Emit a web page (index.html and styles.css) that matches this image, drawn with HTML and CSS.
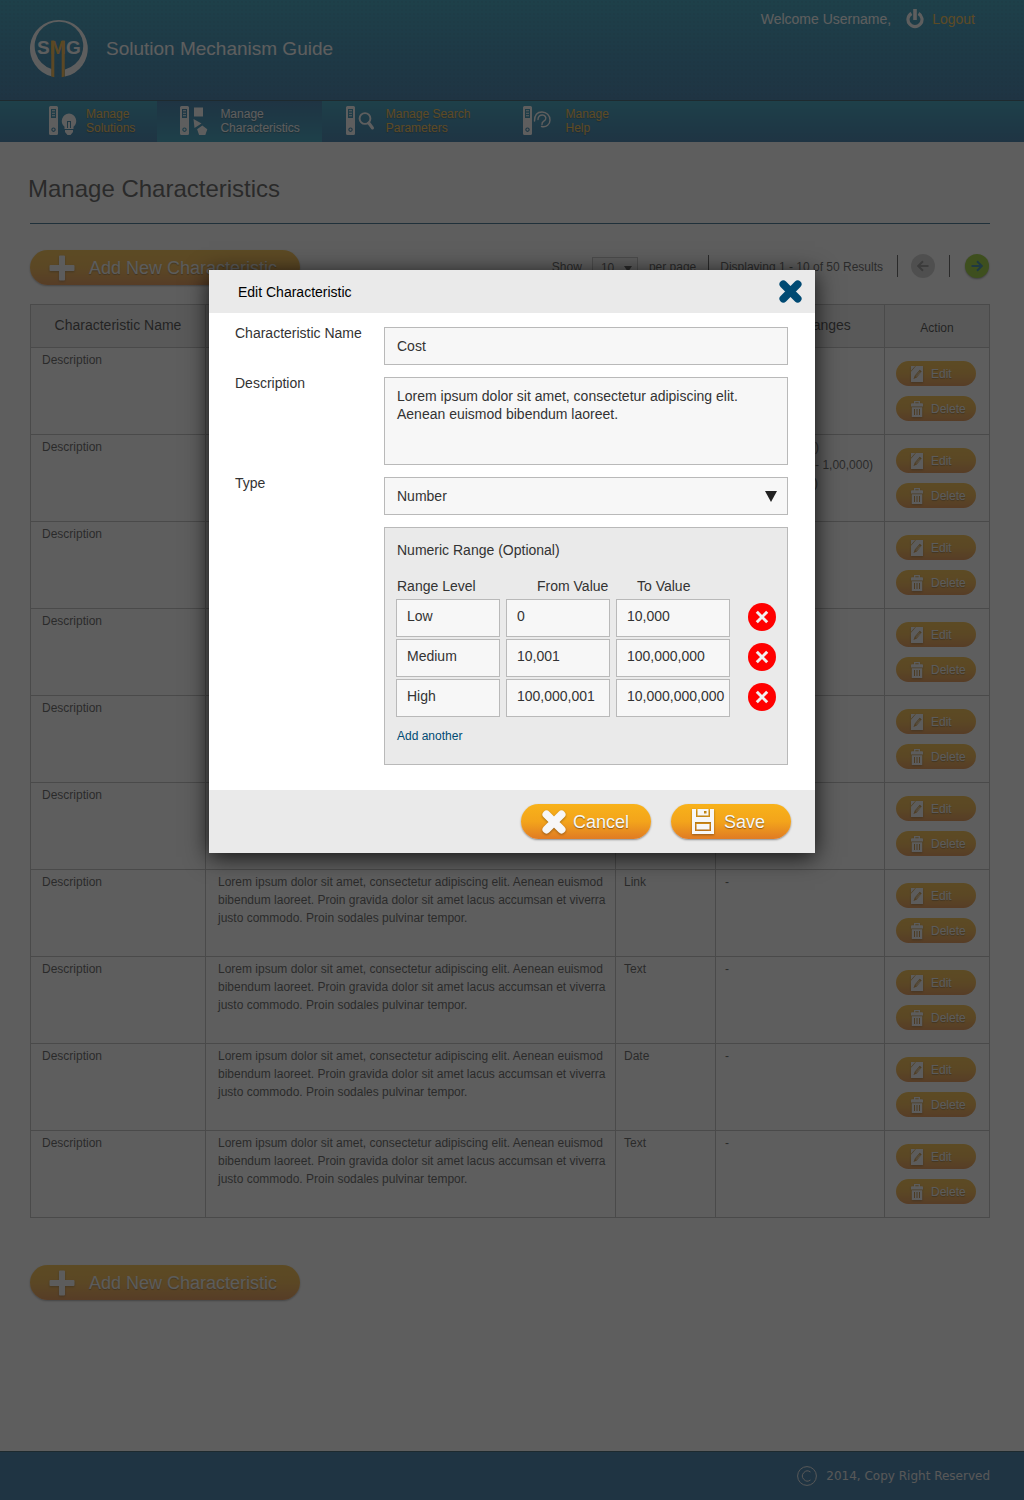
FILE: index.html
```html
<!DOCTYPE html>
<html lang="en">
<head>
<meta charset="utf-8">
<meta name="viewport" content="width=device-width, initial-scale=1">
<title>Manage Characteristics - Solution Mechanism Guide</title>
<link rel="stylesheet" href="styles.css">
</head>
<body>
<svg class="sprite" aria-hidden="true">
  <symbol id="i-plus" viewBox="0 0 26 26"><path d="M10 1.500q0-1 1-1h4q1 0 1 1V10h8.500q1 0 1 1v4q0 1-1 1H16v8.500q0 1-1 1h-4q-1 0-1-1V16H1.500q-1 0-1-1v-4q0-1 1-1H10z"/></symbol>
  <symbol id="i-cross" viewBox="0 0 24 24"><path d="M4.500 4.500l15 15M19.500 4.500l-15 15" stroke="currentColor" stroke-width="8" stroke-linecap="round"/></symbol>
  <symbol id="i-edit" viewBox="0 0 12 16"><path fill-rule="evenodd" d="M5 0H12v16H0V5.700zM8.800 3.800L3.800 9.500 2.500 13l3.400-1.600 4.800-5.900z"/><path d="M0 4.700V0h4.200z"/><path d="M8.600 5.500L4.600 10.200M9.500 6.200L5.500 11" stroke="currentColor" stroke-width=".6"/></symbol>
  <symbol id="i-trash" viewBox="0 0 12 16"><path fill-rule="evenodd" d="M3 0h6v2.300h2q1 0 1 1V5.500H0V3.300q0-1 1-1h2zM4.300 1.200v1.100h3.400V1.200z"/><path fill-rule="evenodd" d="M.8 6.300h10.400V16H.8zM3 8v6h1V8zM5.500 8v6h1V8zM8 8v6h1V8z"/></symbol>
  <symbol id="i-remote" viewBox="0 0 9 29"><path fill-rule="evenodd" d="M1.500 0h6Q9 0 9 1.500v26Q9 29 7.500 29h-6Q0 29 0 27.500v-26Q0 0 1.500 0zM2 3v9h5V3zM4.500 21.500a2.200 2.200 0 1 0 .01 0z"/><path d="M3 4.300h3v1H3zM3 6.800h3v1H3zM3 9.300h3v1H3z"/><circle cx="4.500" cy="23.700" r="1.100"/></symbol>
  <symbol id="i-disk" viewBox="0 0 22 25"><path fill-rule="evenodd" d="M0 0h4v8h14V0h4v25H0zM3 13v9h16v-9z"/><path fill-rule="evenodd" d="M5.500 0h11v6.500h-11zM12 2v2.500h2.500V2z"/><path d="M4.500 15h13v5.500h-13z"/></symbol>
</svg>

<div class="page">
  <header class="site-header">
    <a class="brand" href="#">
      <svg class="brand-logo" viewBox="0 0 58 58" aria-hidden="true">
        <path class="logo-ring" fill-rule="evenodd" d="M29 0a28.600 28.600 0 0 0-7.500 56.300V49.100A24.300 24.300 0 1 1 35 49.500V56.600A28.600 28.600 0 0 0 29 0z"/>
        <path class="logo-leg" d="M21.300 20.500h3v36.700l-3-.8zM31.700 20.500h3v36l-3 .8z"/>
        <text class="logo-text" x="7" y="34">S</text>
        <text class="logo-text logo-mid" x="20" y="34">M</text>
        <text class="logo-text" x="36" y="34">G</text>
      </svg>
      <span class="brand-name">Solution Mechanism Guide</span>
    </a>
    <div class="account">
      <span class="welcome">Welcome Username,</span>
      <a class="logout" href="#">
        <svg class="power" viewBox="0 0 18 20" aria-hidden="true"><path d="M5.500 4.500A7 7 0 1 0 12.500 4.500" fill="none" stroke="currentColor" stroke-width="3.200"/><path d="M7.200 0h3.600v11H7.200z"/></svg>
        Logout</a>
    </div>
  </header>

  <nav class="main-nav" aria-label="Main">
    <a class="nav-item" href="#">
      <svg class="nav-icon" viewBox="0 0 42 30" aria-hidden="true"><use href="#i-remote" x="5" y="0" width="9" height="29"/><path d="M25 7.500a7.500 7.500 0 0 1 4.500 13.200V23h-9v-2.300A7.500 7.500 0 0 1 25 7.500zM21 24h8v2l-2.500 3h-3L21 26z"/><path class="nav-line" d="M23.500 22v-6M26.500 22v-6M23 15.500h4"/></svg>
      <span>Manage<br>Solutions</span></a>
    <a class="nav-item active" href="#" aria-current="page">
      <svg class="nav-icon" viewBox="0 0 42 30" aria-hidden="true"><use href="#i-remote" x="2" y="0" width="9" height="29"/><path d="M16 1.500h9v9h-9zM15.500 13l8 4.500-7 4.500zM24.300 19.500l5 3.700-2 5.800h-6.200l-2-5.800z"/></svg>
      <span>Manage<br>Characteristics</span></a>
    <a class="nav-item nav-item-wide" href="#">
      <svg class="nav-icon" viewBox="0 0 42 30" aria-hidden="true"><use href="#i-remote" x="2" y="0" width="9" height="29"/><circle cx="21" cy="12.500" r="5.400" fill="none" stroke="currentColor" stroke-width="1.900"/><path d="M24.800 17l3.700 5" stroke="currentColor" stroke-width="3" stroke-linecap="round"/></svg>
      <span>Manage Search<br>Parameters</span></a>
    <a class="nav-item" href="#">
      <svg class="nav-icon" viewBox="0 0 42 30" aria-hidden="true"><use href="#i-remote" x="0" y="0" width="9" height="29"/><path d="M11.500 15C11.500 9 14.500 6 19 6S27 9.500 27 14 23.500 21.500 18.500 20.500M15 13.500C15 10.500 17 9 19.500 9S23.500 11.500 22.500 13.500 18.500 15 19 18.500" fill="none" stroke="currentColor" stroke-width="1.400" stroke-linecap="round"/></svg>
      <span>Manage<br>Help</span></a>
  </nav>

  <main class="main">
    <h1 class="page-title">Manage Characteristics</h1>
    <div class="content">
      <div class="toolbar">
        <button class="pill pill-add" type="button"><svg class="plus" aria-hidden="true"><use href="#i-plus"/></svg>Add New Characteristic</button>
        <div class="pager">
          <label class="pager-text" for="per-page">Show</label>
          <span class="page-size"><select id="per-page"><option>10</option></select><svg class="caret-small" viewBox="0 0 8 6" aria-hidden="true"><path d="M0 0h8L4 6z"/></svg></span>
          <span class="pager-text">per page</span>
          <span class="results">Displaying 1 - 10 of 50 Results</span>
          <button class="page-btn" type="button" aria-label="Previous page" disabled><svg viewBox="0 0 12 12" aria-hidden="true"><path d="M11.500 6H1.500M6 1.200L1.200 6 6 10.800"/></svg></button>
          <span class="bar"></span>
          <button class="page-btn page-next" type="button" aria-label="Next page"><svg viewBox="0 0 12 12" aria-hidden="true"><path d="M.5 6h10M6 1.200L10.800 6 6 10.800"/></svg></button>
        </div>
      </div>

      <table class="grid">
        <colgroup><col class="c-name"><col><col class="c-type"><col class="c-range"><col class="c-action"></colgroup>
        <thead><tr><th>Characteristic Name</th><th>Description</th><th>Type</th><th>Values / Ranges</th><th class="th-action">Action</th></tr></thead>
        <tbody>
          <tr><td>Description</td><td>Lorem ipsum dolor sit amet, consectetur adipiscing elit. Aenean euismod bibendum laoreet. Proin gravida dolor sit amet lacus accumsan et viverra justo commodo. Proin sodales pulvinar tempor.</td><td>Text</td><td>-</td><td><div class="actions"><button class="pill mini" type="button"><svg aria-hidden="true"><use href="#i-edit"/></svg>Edit</button><button class="pill mini" type="button"><svg aria-hidden="true"><use href="#i-trash"/></svg>Delete</button></div></td></tr>
          <tr><td>Description</td><td>Lorem ipsum dolor sit amet, consectetur adipiscing elit. Aenean euismod bibendum laoreet. Proin gravida dolor sit amet lacus accumsan et viverra justo commodo. Proin sodales pulvinar tempor.</td><td>Number</td><td>Low (10 - 10,000)<br>Medium (10,001 - 1,00,000)<br>High (&gt; 1,00,000)</td><td><div class="actions"><button class="pill mini" type="button"><svg aria-hidden="true"><use href="#i-edit"/></svg>Edit</button><button class="pill mini" type="button"><svg aria-hidden="true"><use href="#i-trash"/></svg>Delete</button></div></td></tr>
          <tr><td>Description</td><td>Lorem ipsum dolor sit amet, consectetur adipiscing elit. Aenean euismod bibendum laoreet. Proin gravida dolor sit amet lacus accumsan et viverra justo commodo. Proin sodales pulvinar tempor.</td><td>Text</td><td>-</td><td><div class="actions"><button class="pill mini" type="button"><svg aria-hidden="true"><use href="#i-edit"/></svg>Edit</button><button class="pill mini" type="button"><svg aria-hidden="true"><use href="#i-trash"/></svg>Delete</button></div></td></tr>
          <tr><td>Description</td><td>Lorem ipsum dolor sit amet, consectetur adipiscing elit. Aenean euismod bibendum laoreet. Proin gravida dolor sit amet lacus accumsan et viverra justo commodo. Proin sodales pulvinar tempor.</td><td>Text</td><td>-</td><td><div class="actions"><button class="pill mini" type="button"><svg aria-hidden="true"><use href="#i-edit"/></svg>Edit</button><button class="pill mini" type="button"><svg aria-hidden="true"><use href="#i-trash"/></svg>Delete</button></div></td></tr>
          <tr><td>Description</td><td>Lorem ipsum dolor sit amet, consectetur adipiscing elit. Aenean euismod bibendum laoreet. Proin gravida dolor sit amet lacus accumsan et viverra justo commodo. Proin sodales pulvinar tempor.</td><td>Date</td><td>-</td><td><div class="actions"><button class="pill mini" type="button"><svg aria-hidden="true"><use href="#i-edit"/></svg>Edit</button><button class="pill mini" type="button"><svg aria-hidden="true"><use href="#i-trash"/></svg>Delete</button></div></td></tr>
          <tr><td>Description</td><td>Lorem ipsum dolor sit amet, consectetur adipiscing elit. Aenean euismod bibendum laoreet. Proin gravida dolor sit amet lacus accumsan et viverra justo commodo.</td><td>Text</td><td>-</td><td><div class="actions"><button class="pill mini" type="button"><svg aria-hidden="true"><use href="#i-edit"/></svg>Edit</button><button class="pill mini" type="button"><svg aria-hidden="true"><use href="#i-trash"/></svg>Delete</button></div></td></tr>
          <tr><td>Description</td><td>Lorem ipsum dolor sit amet, consectetur adipiscing elit. Aenean euismod bibendum laoreet. Proin gravida dolor sit amet lacus accumsan et viverra justo commodo. Proin sodales pulvinar tempor.</td><td>Link</td><td>-</td><td><div class="actions"><button class="pill mini" type="button"><svg aria-hidden="true"><use href="#i-edit"/></svg>Edit</button><button class="pill mini" type="button"><svg aria-hidden="true"><use href="#i-trash"/></svg>Delete</button></div></td></tr>
          <tr><td>Description</td><td>Lorem ipsum dolor sit amet, consectetur adipiscing elit. Aenean euismod bibendum laoreet. Proin gravida dolor sit amet lacus accumsan et viverra justo commodo. Proin sodales pulvinar tempor.</td><td>Text</td><td>-</td><td><div class="actions"><button class="pill mini" type="button"><svg aria-hidden="true"><use href="#i-edit"/></svg>Edit</button><button class="pill mini" type="button"><svg aria-hidden="true"><use href="#i-trash"/></svg>Delete</button></div></td></tr>
          <tr><td>Description</td><td>Lorem ipsum dolor sit amet, consectetur adipiscing elit. Aenean euismod bibendum laoreet. Proin gravida dolor sit amet lacus accumsan et viverra justo commodo. Proin sodales pulvinar tempor.</td><td>Date</td><td>-</td><td><div class="actions"><button class="pill mini" type="button"><svg aria-hidden="true"><use href="#i-edit"/></svg>Edit</button><button class="pill mini" type="button"><svg aria-hidden="true"><use href="#i-trash"/></svg>Delete</button></div></td></tr>
          <tr><td>Description</td><td>Lorem ipsum dolor sit amet, consectetur adipiscing elit. Aenean euismod bibendum laoreet. Proin gravida dolor sit amet lacus accumsan et viverra justo commodo. Proin sodales pulvinar tempor.</td><td>Text</td><td>-</td><td><div class="actions"><button class="pill mini" type="button"><svg aria-hidden="true"><use href="#i-edit"/></svg>Edit</button><button class="pill mini" type="button"><svg aria-hidden="true"><use href="#i-trash"/></svg>Delete</button></div></td></tr>
        </tbody>
      </table>

      <button class="pill pill-add" type="button"><svg class="plus" aria-hidden="true"><use href="#i-plus"/></svg>Add New Characteristic</button>
    </div>
  </main>

  <footer class="site-footer">
    <svg class="copy-mark" viewBox="0 0 20 20" aria-hidden="true"><circle cx="10" cy="10" r="9.400"/><path d="M13.500 6A5 5 0 1 0 13.500 14"/></svg>
    <span>2014, Copy Right Reserved</span>
  </footer>
</div>

<div class="overlay">
  <form class="modal" role="dialog" aria-modal="true" aria-labelledby="dialog-title">
    <div class="modal-head">
      <h2 id="dialog-title">Edit Characteristic</h2>
      <button class="close" type="button" aria-label="Close"><svg aria-hidden="true"><use href="#i-cross"/></svg></button>
    </div>
    <div class="modal-body">
      <label for="name">Characteristic Name</label>
      <input class="field" id="name" type="text" value="Cost">
      <label for="desc">Description</label>
      <textarea class="field" id="desc">Lorem ipsum dolor sit amet, consectetur adipiscing elit.
Aenean euismod bibendum laoreet.</textarea>
      <label for="type">Type</label>
      <div class="select-wrap">
        <select class="field" id="type"><option>Number</option></select>
        <svg class="caret" viewBox="0 0 12 11" aria-hidden="true"><path d="M0 0h12L6 11z"/></svg>
      </div>
      <div class="range" role="group" aria-labelledby="range-title">
        <div class="range-title" id="range-title">Numeric Range (Optional)</div>
        <div class="range-head"><span>Range Level</span><span>From Value</span><span>To Value</span></div>
        <div class="range-rows">
          <div class="range-row">
            <input type="text" value="Low" aria-label="Range level 1"><input type="text" value="0" aria-label="From value 1"><input type="text" value="10,000" aria-label="To value 1">
            <button class="remove" type="button" aria-label="Remove range 1"><svg viewBox="0 0 28 28" aria-hidden="true"><path d="M8.800 8.800l10.400 10.400M19.200 8.800l-10.400 10.400"/></svg></button>
          </div>
          <div class="range-row">
            <input type="text" value="Medium" aria-label="Range level 2"><input type="text" value="10,001" aria-label="From value 2"><input type="text" value="100,000,000" aria-label="To value 2">
            <button class="remove" type="button" aria-label="Remove range 2"><svg viewBox="0 0 28 28" aria-hidden="true"><path d="M8.800 8.800l10.400 10.400M19.200 8.800l-10.400 10.400"/></svg></button>
          </div>
          <div class="range-row">
            <input type="text" value="High" aria-label="Range level 3"><input type="text" value="100,000,001" aria-label="From value 3"><input type="text" value="10,000,000,000" aria-label="To value 3">
            <button class="remove" type="button" aria-label="Remove range 3"><svg viewBox="0 0 28 28" aria-hidden="true"><path d="M8.800 8.800l10.400 10.400M19.200 8.800l-10.400 10.400"/></svg></button>
          </div>
        </div>
        <a class="add-another" href="#">Add another</a>
      </div>
    </div>
    <div class="modal-foot">
      <button class="pill pill-cancel" type="button"><svg class="cross" aria-hidden="true"><use href="#i-cross"/></svg>Cancel</button>
      <button class="pill pill-save" type="submit"><svg class="disk" aria-hidden="true"><use href="#i-disk"/></svg>Save</button>
    </div>
  </form>
</div>
</body>
</html>
```
FILE: styles.css
```css
* { box-sizing: border-box; }

body {
  margin: 0;
  position: relative;
  background: #fff;
  color: #333;
  font: 14px/16px "Liberation Sans", Arial, sans-serif;
}

a { color: inherit; text-decoration: none; }
button, input, select, textarea { font: inherit; color: inherit; margin: 0; }
button { border: 0; padding: 0; background: none; cursor: pointer; }
svg { fill: currentColor; display: block; flex: none; }
.sprite { position: absolute; width: 0; height: 0; }

.page {
  min-height: 100vh;
  display: flex;
  flex-direction: column;
}

/* Header */
.site-header {
  height: 100px;
  padding: 0 49px 0 30px;
  display: flex;
  justify-content: space-between;
  background:
    radial-gradient(circle, rgba(0, 30, 60, .08) 1px, transparent 1px) 0 0 / 4px 4px,
    linear-gradient(#0088ae, #045894);
  color: #fff;
}
.brand { display: flex; align-items: center; gap: 18px; height: 98px; }
.brand-logo { width: 58px; height: 58px; }
.logo-text { font-size: 19px; font-weight: 700; }
.logo-mid, .logo-leg { fill: #f8a81a; }
.brand-name { font-size: 19px; line-height: 22px; }
.account { display: flex; align-items: center; gap: 15px; height: 37px; }
.logout { display: flex; align-items: center; gap: 8px; color: #f8b21a; }
.power { width: 18px; height: 20px; color: #fff; }

.main-nav {
  display: flex;
  height: 42px;
  padding-left: 22px;
  border-top: 1px solid #033045;
  background: linear-gradient(#0088ae, #045894);
  font-size: 12px;
  line-height: 14px;
  color: #f8b21a;
  text-shadow: 0 1px 1px rgba(0, 0, 0, .5);
}
.nav-item { display: flex; align-items: center; padding: 0 22px 2px; }
.nav-item-wide { padding-right: 31px; }
.nav-item.active { padding-left: 21px; background: linear-gradient(#045894, #0088ae); color: #fff; }
.nav-icon { width: 42px; height: 30px; color: #fff; }
.nav-line { fill: none; stroke: #046898; stroke-width: 1; }

/* Page content */
.main { flex: 1; padding: 33px 34px 60px 28px; }
.page-title { margin: 0 0 20px; font-size: 24px; line-height: 28px; font-weight: 400; }
.content { margin-left: 2px; border-top: 1px solid #044a70; padding-top: 26px; }
.toolbar { display: flex; justify-content: space-between; margin-bottom: 19px; }

.pill {
  display: flex;
  align-items: center;
  height: 35px;
  border-radius: 18px;
  background: linear-gradient(#f8b21a, #f3a41b 50%, #e07b24);
  box-shadow: 0 1px 2px rgba(0, 0, 0, .4);
  color: #f7f7f7;
  font-size: 18px;
  text-shadow: 0 1px 1px rgba(0, 0, 0, .4);
}
.pill svg { filter: drop-shadow(0 1px 1px rgba(0, 0, 0, .35)); }
.pill-add { width: 270px; padding-left: 19px; gap: 14px; }
.plus { width: 26px; height: 26px; }

.pager { display: flex; align-items: center; height: 32px; padding-right: 1px; font-size: 12px; }
.pager-text { padding-top: 2px; }
.page-size { position: relative; margin: 0 11px 0 10px; padding-top: 4px; }
.page-size select {
  display: block;
  appearance: none;
  width: 46px;
  height: 22px;
  padding: 0 8px;
  border: 1px solid #b9b9b9;
  border-radius: 0;
  background: #f7f7f7;
}
.caret-small { position: absolute; right: 6px; top: 13px; width: 8px; height: 6px; }
.results {
  margin: 0 13px 0 12px;
  padding: 2px 14px 0 11px;
  border: solid #333;
  border-width: 0 1px;
  line-height: 20px;
}
.page-btn {
  width: 24px;
  height: 24px;
  border-radius: 50%;
  display: grid;
  place-items: center;
  background: #c4c4c4;
  color: #777;
}
.page-btn svg { width: 12px; height: 12px; fill: none; stroke: currentColor; stroke-width: 2; }
.page-next { background: #7fc400; color: #046890; box-shadow: 0 1px 2px rgba(0, 0, 0, .5); }
.bar { width: 1px; height: 22px; margin: 0 15px 0 14px; background: #333; }

/* Data table */
.grid {
  width: 100%;
  margin-bottom: 47px;
  table-layout: fixed;
  border-collapse: collapse;
  font-size: 12px;
  line-height: 18px;
}
.c-name { width: 175px; }
.c-type { width: 100px; }
.c-range { width: 169px; }
.c-action { width: 105px; }
.grid th, .grid td { border: 1px solid #b0b0b0; }
.grid th { height: 43px; padding: 0 0 2px; background: #ebebeb; font-size: 14px; font-weight: 400; color: #111; }
.grid .th-action { font-size: 12px; padding: 3px 0 0; }
.grid td { height: 87px; padding: 3px 8px; vertical-align: top; }
.grid td:nth-child(1) { padding-left: 11px; }
.grid td:nth-child(2) { padding-left: 12px; }
.grid td:nth-child(4) { padding-left: 9px; }
.grid td:nth-child(5) { padding: 13px 11px; }
.actions { display: grid; gap: 10px; }
.mini { width: 80px; height: 25px; padding-left: 15px; gap: 8px; font-size: 12px; box-shadow: none; }
.mini svg { width: 12px; height: 16px; }

/* Footer */
.site-footer {
  height: 49px;
  padding-right: 34px;
  display: flex;
  align-items: center;
  justify-content: flex-end;
  gap: 9px;
  border-top: 1px solid #033045;
  background: #045894;
  color: #e6e6e6;
  font: 12px/16px "DejaVu Sans", Verdana, sans-serif;
}
.copy-mark { width: 20px; height: 20px; fill: none; stroke: currentColor; stroke-width: 1; }

/* Dialog */
.overlay {
  position: absolute;
  inset: 0;
  display: flex;
  align-items: flex-start;
  justify-content: center;
  padding-top: 270px;
  background: rgba(40, 40, 40, .75);
}
.modal {
  width: 606px;
  max-width: 100%;
  background: #fff;
  box-shadow: 0 4px 22px rgba(0, 0, 0, .8);
}
.modal-head {
  height: 43px;
  padding: 0 13px 0 29px;
  display: flex;
  align-items: center;
  justify-content: space-between;
  background: #eaeaea;
}
.modal-head h2 { margin: 0; font-size: 14px; font-weight: 400; color: #000; }
.close { color: #004a73; }
.close svg { width: 23px; height: 23px; }

.modal-body {
  display: grid;
  grid-template-columns: 149px 1fr;
  row-gap: 12px;
  align-items: start;
  padding: 14px 27px 25px 26px;
}
.modal-body label { line-height: 12px; }
.field {
  display: block;
  width: 100%;
  height: 38px;
  padding: 0 12px;
  border: 1px solid #b9b9b9;
  border-radius: 0;
  background: #f7f7f7;
  appearance: none;
}
textarea.field { height: 88px; padding-top: 9px; line-height: 18px; resize: none; overflow: hidden; }
.select-wrap { position: relative; }
.caret { position: absolute; right: 11px; top: 14px; width: 12px; height: 11px; color: #222; }

.range { grid-column: 2; padding: 14px 11px 21px; border: 1px solid #b9b9b9; background: #eaeaea; }
.range-title, .range-head, .add-another { padding-left: 1px; }
.range-head { display: grid; grid-template-columns: 140px 100px 1fr; margin: 20px 0 5px; }
.range-rows { display: grid; gap: 2px; }
.range-row { display: grid; grid-template-columns: 104px 104px 114px 1fr; gap: 6px; }
.range-row input {
  width: 100%;
  height: 38px;
  padding: 0 4px 4px 10px;
  border: 1px solid #b9b9b9;
  background: #f7f7f7;
}
.remove { justify-self: end; margin-top: 4px; width: 28px; height: 28px; border-radius: 50%; background: #f00; color: #f0f0f0; }
.remove svg { stroke: currentColor; stroke-width: 3; }
.add-another { display: block; margin-top: 12px; font-size: 12px; line-height: 14px; color: #004a73; }

.modal-foot {
  height: 63px;
  padding: 0 24px;
  display: flex;
  align-items: center;
  justify-content: flex-end;
  gap: 20px;
  background: #eaeaea;
}
.pill-cancel { width: 130px; padding-left: 21px; gap: 7px; }
.pill-save { width: 120px; padding-left: 21px; gap: 10px; }
.cross { width: 24px; height: 24px; }
.disk { width: 22px; height: 25px; }
```
